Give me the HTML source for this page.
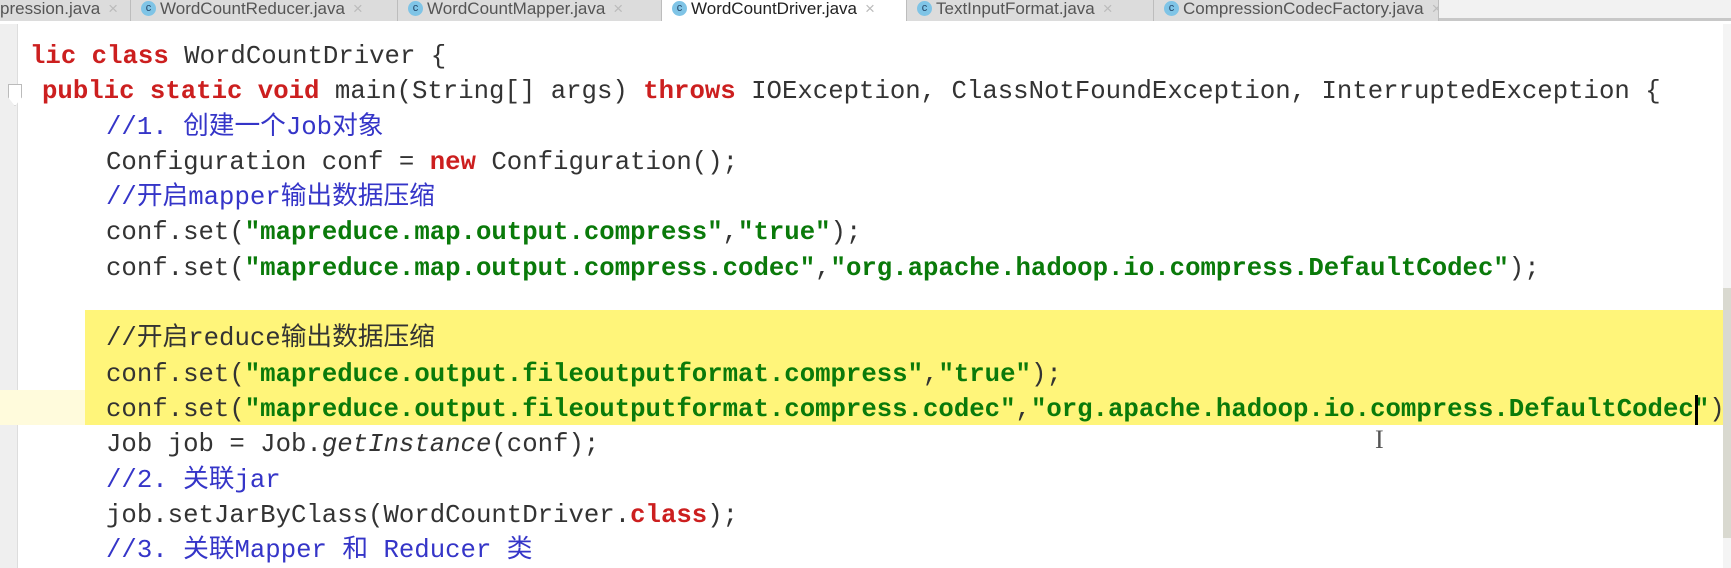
<!DOCTYPE html>
<html><head><meta charset="utf-8"><style>
*{margin:0;padding:0;box-sizing:border-box}
html,body{width:1731px;height:568px;overflow:hidden}
body{background:#fff;position:relative;font-family:"Liberation Mono","Noto Sans CJK SC",monospace}
.tabs{position:absolute;left:0;top:0;width:1731px;height:21px;background:#f2f2f2;border-bottom:3px solid #c8c8c8}
.tab{position:absolute;top:0;height:21px;background:#dcdcdc;border-right:1px solid #bdbdbd;font-family:"Liberation Sans",sans-serif;font-size:17px;color:#555;line-height:17px;white-space:nowrap;overflow:hidden}
.tab.act{background:#fff;color:#222}
.ic{display:inline-block;width:15px;height:15px;border-radius:50%;background:#7fc4e6;color:#246;font-size:11px;text-align:center;line-height:15px;vertical-align:top;margin:1px 4px 0 10px}
.x{color:#bbb;margin-left:8px}
.gutter{position:absolute;left:0;top:24px;width:18px;height:544px;background:#efefef;border-right:1px solid #ddd}
.hl{position:absolute;left:85px;top:310px;width:1641px;height:115px;background:#fff57a}
.cur{position:absolute;left:0;top:390px;width:85px;height:35px;background:#fffbdc}
.sb{position:absolute;left:1723px;top:24px;width:8px;height:544px;background:#f4f4f4}
.th{position:absolute;left:1723px;top:288px;width:8px;height:250px;background:#d9d9d0}
.code{position:absolute;left:0;top:39px;font-size:25.7px;line-height:35.3px;color:#333}
.l{height:35.3px;white-space:pre}
.k{color:#cc1f1f;font-weight:bold}
.c{color:#3535c8}
.s{color:#0a7a0a;font-weight:bold}
.i{font-style:italic}
.fold{position:absolute;left:8px;top:84px;width:14px;height:22px;border:1px solid #bbb;background:#fff;clip-path:polygon(0 0,100% 0,100% 60%,50% 100%,0 60%)}
.caret{position:absolute;left:1695px;top:395px;width:3px;height:30px;background:#000}
.ib{position:absolute;left:1375px;top:425px;font-family:"Liberation Serif",serif;font-size:26px;color:#555}
</style></head><body>
<div class="tabs">
<div class="tab" style="left:0;width:131px;padding-left:0">pression.java<span class="x">×</span></div>
<div class="tab" style="left:131px;width:267px"><span class="ic">c</span>WordCountReducer.java<span class="x">×</span></div>
<div class="tab" style="left:398px;width:264px"><span class="ic">c</span>WordCountMapper.java<span class="x">×</span></div>
<div class="tab act" style="left:662px;width:245px"><span class="ic">c</span>WordCountDriver.java<span class="x">×</span></div>
<div class="tab" style="left:907px;width:247px"><span class="ic">c</span>TextInputFormat.java<span class="x">×</span></div>
<div class="tab" style="left:1154px;width:285px"><span class="ic">c</span>CompressionCodecFactory.java<span class="x">×</span></div>
</div>
<div class="gutter"></div>
<div class="cur"></div>
<div class="hl"></div>
<div class="sb"></div><div class="th"></div>
<div class="fold"></div>
<div class="code"><div class="l" style="padding-left:30px"><span class="k">lic class</span> WordCountDriver {</div><div class="l" style="padding-left:42px"><span class="k">public static void</span> main(String[] args) <span class="k">throws</span> IOException, ClassNotFoundException, InterruptedException {</div><div class="l" style="padding-left:106px"><span class="c">//1. 创建一个Job对象</span></div><div class="l" style="padding-left:106px">Configuration conf = <span class="k">new</span> Configuration();</div><div class="l" style="padding-left:106px"><span class="c">//开启mapper输出数据压缩</span></div><div class="l" style="padding-left:106px">conf.set(<span class="s">"mapreduce.map.output.compress"</span>,<span class="s">"true"</span>);</div><div class="l" style="padding-left:106px">conf.set(<span class="s">"mapreduce.map.output.compress.codec"</span>,<span class="s">"org.apache.hadoop.io.compress.DefaultCodec"</span>);</div><div class="l"></div><div class="l" style="padding-left:106px">//开启reduce输出数据压缩</div><div class="l" style="padding-left:106px">conf.set(<span class="s">"mapreduce.output.fileoutputformat.compress"</span>,<span class="s">"true"</span>);</div><div class="l" style="padding-left:106px">conf.set(<span class="s">"mapreduce.output.fileoutputformat.compress.codec"</span>,<span class="s">"org.apache.hadoop.io.compress.DefaultCodec"</span>)</div><div class="l" style="padding-left:106px">Job job = Job.<span class="i">getInstance</span>(conf);</div><div class="l" style="padding-left:106px"><span class="c">//2. 关联jar</span></div><div class="l" style="padding-left:106px">job.setJarByClass(WordCountDriver.<span class="k">class</span>);</div><div class="l" style="padding-left:106px"><span class="c">//3. 关联Mapper 和 Reducer 类</span></div></div>
<div class="caret"></div>
<div class="ib">I</div>
</body></html>
